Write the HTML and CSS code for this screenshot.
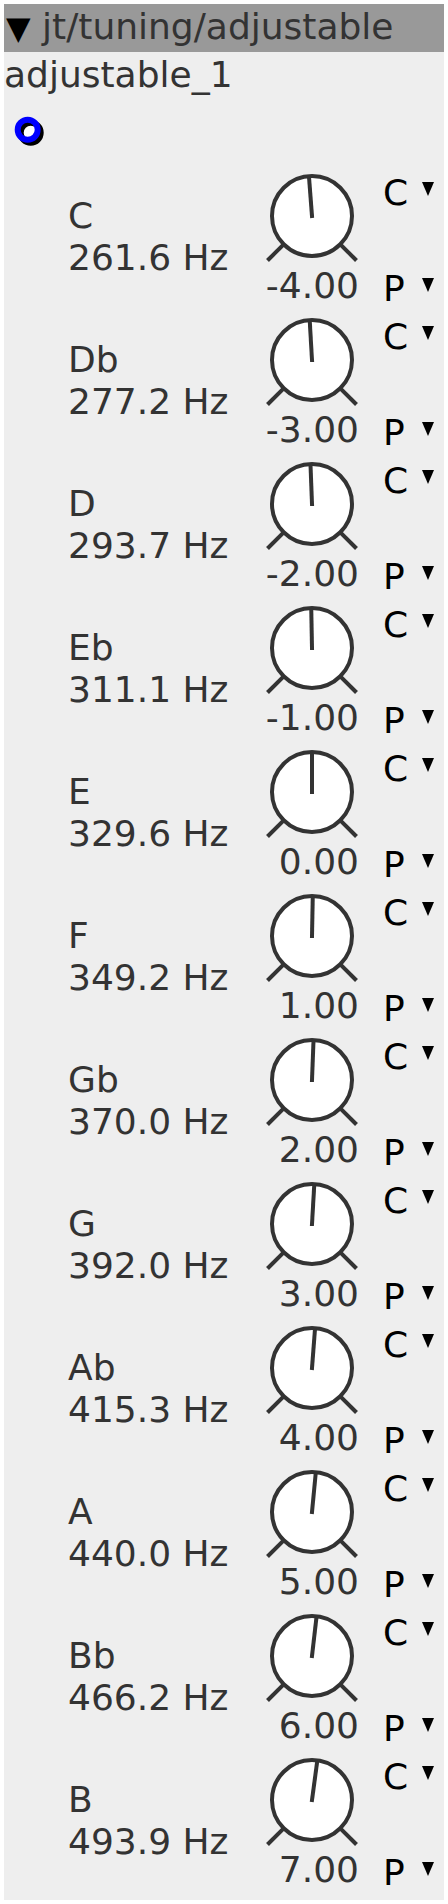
FILE: index.html
```html
<!DOCTYPE html>
<html>
<head>
<meta charset="utf-8">
<link rel="stylesheet" href="styles.css">
</head>
<body>
<div class="panel">
  <div class="header"><span class="tri">▼</span> jt/tuning/adjustable</div>
  <div class="name">adjustable_1</div>
  <div class="ring">
    <svg width="32" height="32" viewBox="0 0 32 32">
      <circle cx="18.7" cy="18.7" r="10" fill="#fff" stroke="#000" stroke-width="6"/>
      <circle cx="15.7" cy="15.7" r="10" fill="none" stroke="#0000ff" stroke-width="6"/>
    </svg>
  </div>
  <div class="rows">
    <div class="row">
      <div class="label"><div>C</div><div>261.6 Hz</div></div>
      <div class="knob">
        <svg width="96" height="96" viewBox="0 0 96 96"><circle cx="48" cy="48" r="40" fill="#fff" stroke="#333" stroke-width="4"/><line x1="19.7" y1="76.3" x2="3.5" y2="92.5" stroke="#333" stroke-width="4"/><line x1="76.3" y1="76.3" x2="92.5" y2="92.5" stroke="#333" stroke-width="4"/><line x1="48" y1="50" x2="48" y2="8.5" stroke="#333" stroke-width="4" transform="rotate(-4.4 48 48)"/></svg>
        <div class="value">-4.00</div>
      </div>
      <div class="dd"><div class="sel">C<span class="arrow"></span></div><div class="sel">P<span class="arrow"></span></div></div>
    </div>
    <div class="row">
      <div class="label"><div>Db</div><div>277.2 Hz</div></div>
      <div class="knob">
        <svg width="96" height="96" viewBox="0 0 96 96"><circle cx="48" cy="48" r="40" fill="#fff" stroke="#333" stroke-width="4"/><line x1="19.7" y1="76.3" x2="3.5" y2="92.5" stroke="#333" stroke-width="4"/><line x1="76.3" y1="76.3" x2="92.5" y2="92.5" stroke="#333" stroke-width="4"/><line x1="48" y1="50" x2="48" y2="8.5" stroke="#333" stroke-width="4" transform="rotate(-3.3 48 48)"/></svg>
        <div class="value">-3.00</div>
      </div>
      <div class="dd"><div class="sel">C<span class="arrow"></span></div><div class="sel">P<span class="arrow"></span></div></div>
    </div>
    <div class="row">
      <div class="label"><div>D</div><div>293.7 Hz</div></div>
      <div class="knob">
        <svg width="96" height="96" viewBox="0 0 96 96"><circle cx="48" cy="48" r="40" fill="#fff" stroke="#333" stroke-width="4"/><line x1="19.7" y1="76.3" x2="3.5" y2="92.5" stroke="#333" stroke-width="4"/><line x1="76.3" y1="76.3" x2="92.5" y2="92.5" stroke="#333" stroke-width="4"/><line x1="48" y1="50" x2="48" y2="8.5" stroke="#333" stroke-width="4" transform="rotate(-2.2 48 48)"/></svg>
        <div class="value">-2.00</div>
      </div>
      <div class="dd"><div class="sel">C<span class="arrow"></span></div><div class="sel">P<span class="arrow"></span></div></div>
    </div>
    <div class="row">
      <div class="label"><div>Eb</div><div>311.1 Hz</div></div>
      <div class="knob">
        <svg width="96" height="96" viewBox="0 0 96 96"><circle cx="48" cy="48" r="40" fill="#fff" stroke="#333" stroke-width="4"/><line x1="19.7" y1="76.3" x2="3.5" y2="92.5" stroke="#333" stroke-width="4"/><line x1="76.3" y1="76.3" x2="92.5" y2="92.5" stroke="#333" stroke-width="4"/><line x1="48" y1="50" x2="48" y2="8.5" stroke="#333" stroke-width="4" transform="rotate(-1.1 48 48)"/></svg>
        <div class="value">-1.00</div>
      </div>
      <div class="dd"><div class="sel">C<span class="arrow"></span></div><div class="sel">P<span class="arrow"></span></div></div>
    </div>
    <div class="row">
      <div class="label"><div>E</div><div>329.6 Hz</div></div>
      <div class="knob">
        <svg width="96" height="96" viewBox="0 0 96 96"><circle cx="48" cy="48" r="40" fill="#fff" stroke="#333" stroke-width="4"/><line x1="19.7" y1="76.3" x2="3.5" y2="92.5" stroke="#333" stroke-width="4"/><line x1="76.3" y1="76.3" x2="92.5" y2="92.5" stroke="#333" stroke-width="4"/><line x1="48" y1="50" x2="48" y2="8.5" stroke="#333" stroke-width="4" transform="rotate(0 48 48)"/></svg>
        <div class="value">0.00</div>
      </div>
      <div class="dd"><div class="sel">C<span class="arrow"></span></div><div class="sel">P<span class="arrow"></span></div></div>
    </div>
    <div class="row">
      <div class="label"><div>F</div><div>349.2 Hz</div></div>
      <div class="knob">
        <svg width="96" height="96" viewBox="0 0 96 96"><circle cx="48" cy="48" r="40" fill="#fff" stroke="#333" stroke-width="4"/><line x1="19.7" y1="76.3" x2="3.5" y2="92.5" stroke="#333" stroke-width="4"/><line x1="76.3" y1="76.3" x2="92.5" y2="92.5" stroke="#333" stroke-width="4"/><line x1="48" y1="50" x2="48" y2="8.5" stroke="#333" stroke-width="4" transform="rotate(1.1 48 48)"/></svg>
        <div class="value">1.00</div>
      </div>
      <div class="dd"><div class="sel">C<span class="arrow"></span></div><div class="sel">P<span class="arrow"></span></div></div>
    </div>
    <div class="row">
      <div class="label"><div>Gb</div><div>370.0 Hz</div></div>
      <div class="knob">
        <svg width="96" height="96" viewBox="0 0 96 96"><circle cx="48" cy="48" r="40" fill="#fff" stroke="#333" stroke-width="4"/><line x1="19.7" y1="76.3" x2="3.5" y2="92.5" stroke="#333" stroke-width="4"/><line x1="76.3" y1="76.3" x2="92.5" y2="92.5" stroke="#333" stroke-width="4"/><line x1="48" y1="50" x2="48" y2="8.5" stroke="#333" stroke-width="4" transform="rotate(2.2 48 48)"/></svg>
        <div class="value">2.00</div>
      </div>
      <div class="dd"><div class="sel">C<span class="arrow"></span></div><div class="sel">P<span class="arrow"></span></div></div>
    </div>
    <div class="row">
      <div class="label"><div>G</div><div>392.0 Hz</div></div>
      <div class="knob">
        <svg width="96" height="96" viewBox="0 0 96 96"><circle cx="48" cy="48" r="40" fill="#fff" stroke="#333" stroke-width="4"/><line x1="19.7" y1="76.3" x2="3.5" y2="92.5" stroke="#333" stroke-width="4"/><line x1="76.3" y1="76.3" x2="92.5" y2="92.5" stroke="#333" stroke-width="4"/><line x1="48" y1="50" x2="48" y2="8.5" stroke="#333" stroke-width="4" transform="rotate(3.3 48 48)"/></svg>
        <div class="value">3.00</div>
      </div>
      <div class="dd"><div class="sel">C<span class="arrow"></span></div><div class="sel">P<span class="arrow"></span></div></div>
    </div>
    <div class="row">
      <div class="label"><div>Ab</div><div>415.3 Hz</div></div>
      <div class="knob">
        <svg width="96" height="96" viewBox="0 0 96 96"><circle cx="48" cy="48" r="40" fill="#fff" stroke="#333" stroke-width="4"/><line x1="19.7" y1="76.3" x2="3.5" y2="92.5" stroke="#333" stroke-width="4"/><line x1="76.3" y1="76.3" x2="92.5" y2="92.5" stroke="#333" stroke-width="4"/><line x1="48" y1="50" x2="48" y2="8.5" stroke="#333" stroke-width="4" transform="rotate(4.4 48 48)"/></svg>
        <div class="value">4.00</div>
      </div>
      <div class="dd"><div class="sel">C<span class="arrow"></span></div><div class="sel">P<span class="arrow"></span></div></div>
    </div>
    <div class="row">
      <div class="label"><div>A</div><div>440.0 Hz</div></div>
      <div class="knob">
        <svg width="96" height="96" viewBox="0 0 96 96"><circle cx="48" cy="48" r="40" fill="#fff" stroke="#333" stroke-width="4"/><line x1="19.7" y1="76.3" x2="3.5" y2="92.5" stroke="#333" stroke-width="4"/><line x1="76.3" y1="76.3" x2="92.5" y2="92.5" stroke="#333" stroke-width="4"/><line x1="48" y1="50" x2="48" y2="8.5" stroke="#333" stroke-width="4" transform="rotate(5.5 48 48)"/></svg>
        <div class="value">5.00</div>
      </div>
      <div class="dd"><div class="sel">C<span class="arrow"></span></div><div class="sel">P<span class="arrow"></span></div></div>
    </div>
    <div class="row">
      <div class="label"><div>Bb</div><div>466.2 Hz</div></div>
      <div class="knob">
        <svg width="96" height="96" viewBox="0 0 96 96"><circle cx="48" cy="48" r="40" fill="#fff" stroke="#333" stroke-width="4"/><line x1="19.7" y1="76.3" x2="3.5" y2="92.5" stroke="#333" stroke-width="4"/><line x1="76.3" y1="76.3" x2="92.5" y2="92.5" stroke="#333" stroke-width="4"/><line x1="48" y1="50" x2="48" y2="8.5" stroke="#333" stroke-width="4" transform="rotate(6.6 48 48)"/></svg>
        <div class="value">6.00</div>
      </div>
      <div class="dd"><div class="sel">C<span class="arrow"></span></div><div class="sel">P<span class="arrow"></span></div></div>
    </div>
    <div class="row">
      <div class="label"><div>B</div><div>493.9 Hz</div></div>
      <div class="knob">
        <svg width="96" height="96" viewBox="0 0 96 96"><circle cx="48" cy="48" r="40" fill="#fff" stroke="#333" stroke-width="4"/><line x1="19.7" y1="76.3" x2="3.5" y2="92.5" stroke="#333" stroke-width="4"/><line x1="76.3" y1="76.3" x2="92.5" y2="92.5" stroke="#333" stroke-width="4"/><line x1="48" y1="50" x2="48" y2="8.5" stroke="#333" stroke-width="4" transform="rotate(7.7 48 48)"/></svg>
        <div class="value">7.00</div>
      </div>
      <div class="dd"><div class="sel">C<span class="arrow"></span></div><div class="sel">P<span class="arrow"></span></div></div>
    </div>
  </div>
</div>
</body>
</html>
```

FILE: styles.css
```css
html, body {
  margin: 0;
  padding: 0;
  background: #ffffff;
}
body {
  font-family: "DejaVu Sans", sans-serif;
  font-size: 36px;
  color: #333333;
}
.panel {
  margin: 4px 4px 0 4px;
  width: 440px;
  height: 1896px;
  background: #eeeeee;
}
.header {
  height: 48px;
  line-height: 46px;
  background: #999999;
  padding-left: 2px;
  white-space: nowrap;
  overflow: hidden;
}
.tri {
  font-size: 32px;
  color: #000000;
}
.name {
  padding-top: 3px;
  line-height: 40px;
  padding-left: 0;
}
.ring {
  margin: 19px 0 0 8px;
  height: 32px;
}
.ring svg {
  display: block;
}
.rows {
  padding-top: 18px;
}
.row {
  display: flex;
  height: 144px;
}
.label {
  flex: 1;
  padding-left: 64px;
  padding-top: 31px;
  line-height: 42px;
  white-space: nowrap;
}
.knob {
  width: 96px;
  padding-top: 4px;
  display: flex;
  flex-direction: column;
}
.knob svg {
  display: block;
}
.value {
  margin-top: 2px;
  line-height: 40px;
  text-align: right;
  padding-right: 1px;
  white-space: nowrap;
}
.dd {
  width: 51px;
  margin-left: 23px;
  padding-right: 10px;
  color: #000000;
  padding-top: 9px;
  display: flex;
  flex-direction: column;
  gap: 56px;
}
.sel {
  line-height: 40px;
  display: flex;
  justify-content: space-between;
  align-items: flex-start;
}
.arrow {
  width: 0;
  height: 0;
  margin-top: 9px;
  border-left: 6px solid transparent;
  border-right: 6px solid transparent;
  border-top: 14px solid #000000;
}
```
